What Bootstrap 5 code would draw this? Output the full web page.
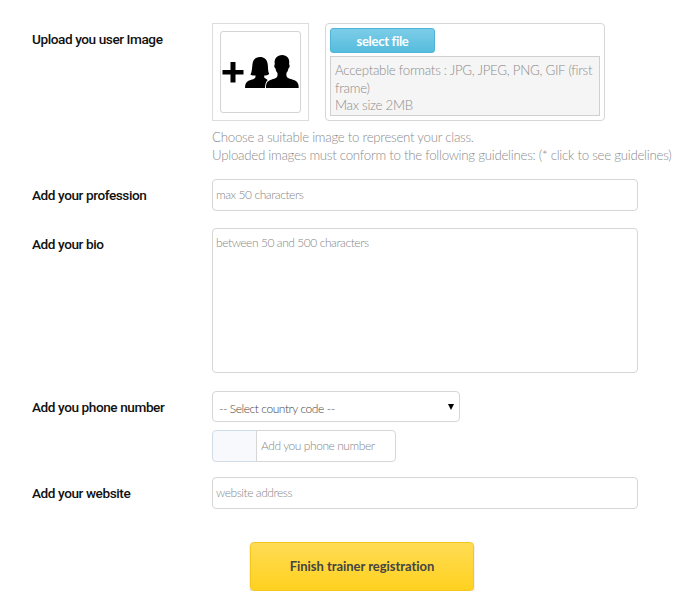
<!DOCTYPE html>
<html lang="en">
<head>
<meta charset="utf-8">
<meta name="viewport" content="width=device-width, initial-scale=1">
<title>Trainer registration</title>
<link rel="stylesheet" href="https://cdn.jsdelivr.net/npm/bootstrap@5.3.0/dist/css/bootstrap.min.css">
<style>
body{font-family:Lato,"Liberation Sans",sans-serif;font-weight:300;font-size:13.3px;line-height:17.5px;letter-spacing:-.275px;color:#8c8c8c;overflow:hidden}
.reg-form{padding:23px 0 0 32px;width:692px}
.field-name{width:180px;flex:none;padding-top:6px;font-family:Roboto,sans-serif;font-weight:500;font-size:13.6px;line-height:21px;letter-spacing:-.42px;color:#111;white-space:nowrap}
.photo{width:97px;height:98px;border:1px solid #dcdcdc;padding:7px}
.photo-in{width:81px;height:82px;border:1px solid #d4d4d4;border-radius:3px}
.upload{width:280px;height:98px;border:1px solid #d6d6d6;border-radius:4px;padding:4px}
.btn-file{width:105px;height:25px;padding:0;border:1px solid #4db5d8;border-radius:3px;background:linear-gradient(#7ccde8,#56bcdd);color:#fff;font-size:13px;font-weight:700;line-height:25px;letter-spacing:-.3px;font-variant-ligatures:none}
.formats{width:270px;height:60px;margin-top:3px;padding:5px 3px 0 4px;background:#f5f5f5;border:1px solid #d0d0d0}
.form-control,.form-select,.input-group-text{border-color:#d6d6d6;border-radius:4px;font-size:12px;font-weight:300;line-height:17px;letter-spacing:-.44px;padding:6px 3px}
.form-control::placeholder{color:#868686;opacity:1}
.wide{width:426px;height:32px}
input.wide{padding:4px 3px 6px}
textarea.wide{height:145px;padding-top:5px;resize:none}
.gap-a{margin-top:15px}
.gap-b{margin-top:17px}
.gap-c{margin-top:18px}
.form-select{width:248px;height:31px;padding:7px 6px 4px;color:#444;background-position:right 5px center;background-size:6px 6px;background-image:url("data:image/svg+xml,%3Csvg xmlns='http://www.w3.org/2000/svg' viewBox='0 0 6 6'%3E%3Cpath d='M0 0h6L3 6z'/%3E%3C/svg%3E")}
.phone{width:184px;height:32px}
.phone .input-group-text{width:45px;background:#f7f9fd;border-color:#d0dce6}
.phone .form-control{padding:5px 3px 7px 4px}
.btn-finish{width:224px;height:49px;margin:33px 0 0 218px;padding:0;border:1px solid #f5c71c;border-radius:4px;background:linear-gradient(#ffdc54,#ffd11f);color:#444;font-size:13px;font-weight:700;letter-spacing:-.03px;font-variant-ligatures:none;box-shadow:0 1px 2px #ccc}
</style>
</head>
<body class="bg-white">
<form class="reg-form">
  <div class="d-flex">
    <label class="field-name">Upload you user Image</label>
    <div>
      <div class="d-flex gap-3">
        <div class="photo"><div class="photo-in">
          <svg class="d-block" width="79" height="80" viewBox="221 32 79 80" aria-hidden="true">
            <path d="M222.500 70h8v-8h5v8h8v4.500h-8v8h-5v-8h-8z"/>
            <path d="M245 88c0-4 1-6 4-7.500 3-1 6-1.500 6.500-3.500v-1.500c-2 .3-4 0-5-1 1.500-3 1.500-6 2-10.500.5-4.500 3.500-7 7.500-7s7.200 2.500 7.700 7c.5 4 0 7 1.500 10-1.500 1-3 1.500-5 1.500v2l3.500 2.500c-2 1.500-2.500 4.500-2.700 8z"/>
            <path d="M266 88c0-5 1-6.500 4.500-8 3.500-1.300 7-2 7-4.500v-2.500c-1.200-1.500-1.700-2.500-2-4.500-1.500-1-1.500-3-.7-4.500-1-5.500 2.500-9 7.300-9s8 3.500 7 9c.8 1.500.8 3.500-.7 4.500-.3 2-.8 3-2 4.500v2.500c0 2.500 3.500 3.200 7.300 4.500 4 1.500 5 3.500 5 8z"/>
          </svg>
        </div></div>
        <div class="upload">
          <button type="button" class="btn btn-file d-block">select file</button>
          <div class="formats">Acceptable formats : JPG, JPEG, PNG, GIF (first frame)<br>Max size 2MB</div>
        </div>
      </div>
      <div class="pt-2 text-nowrap">Choose a suitable image to represent your class.<br>Uploaded images must conform to the following guidelines: (* click to see guidelines)</div>
    </div>
  </div>
  <div class="d-flex gap-a">
    <label class="field-name">Add your profession</label>
    <input class="form-control wide" placeholder="max 50 characters">
  </div>
  <div class="d-flex gap-b">
    <label class="field-name">Add your bio</label>
    <textarea class="form-control wide" placeholder="between 50 and 500 characters"></textarea>
  </div>
  <div class="d-flex gap-c">
    <label class="field-name">Add you phone number</label>
    <div>
      <select class="form-select"><option>-- Select country code --</option></select>
      <div class="input-group phone mt-2"><span class="input-group-text"></span><input class="form-control" placeholder="Add you phone number"></div>
    </div>
  </div>
  <div class="d-flex gap-a">
    <label class="field-name">Add your website</label>
    <input class="form-control wide" placeholder="website address">
  </div>
  <button type="button" class="btn btn-finish">Finish trainer registration</button>
</form>
<script src="https://cdn.jsdelivr.net/npm/bootstrap@5.3.0/dist/js/bootstrap.bundle.min.js"></script>
</body>
</html>
